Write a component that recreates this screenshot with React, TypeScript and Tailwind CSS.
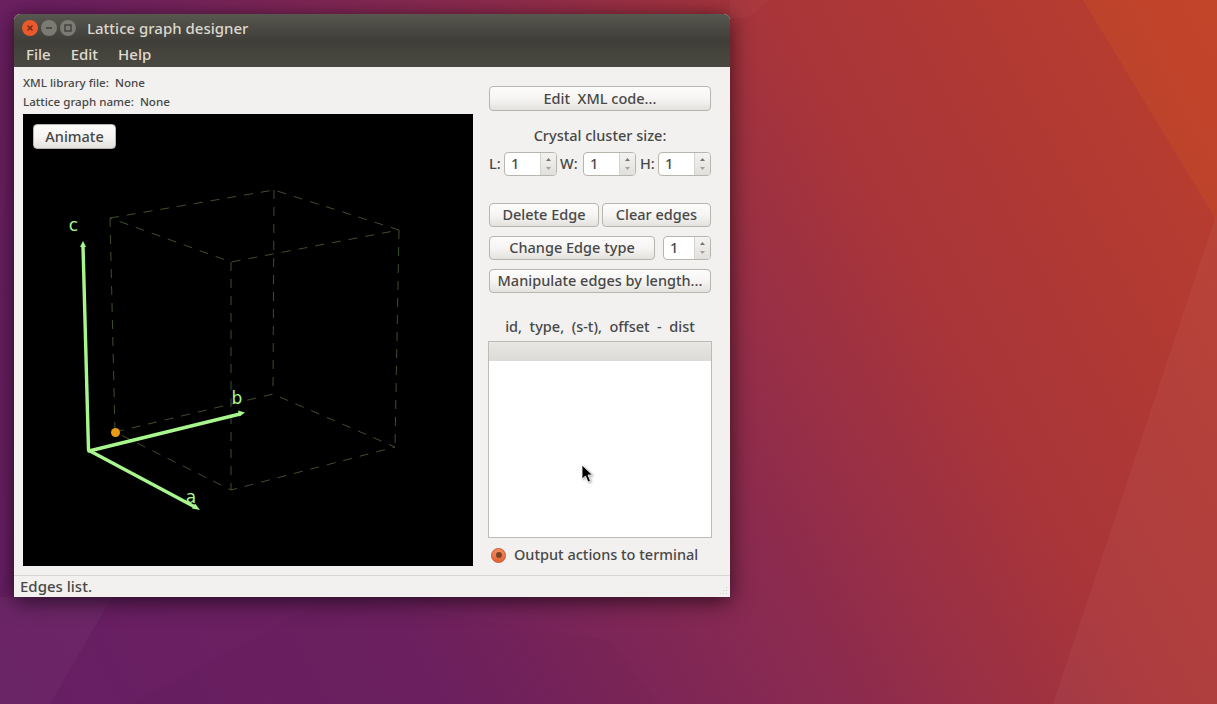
import type { ReactNode } from "react";

const uiFont = "font-['Noto_Sans','Open_Sans',sans-serif]";

function Button({ children, className = "" }: { children: ReactNode; className?: string }) {
  return (
    <button className={`flex items-center justify-center rounded-[4px] border border-[#b8b5af] bg-gradient-to-b from-[#fcfcfb] via-[#f6f5f3] to-[#e4e2de] text-[14.5px] font-medium text-[#484848] whitespace-pre ${className}`}>
      {children}
    </button>
  );
}

function Spin({ className = "" }: { className?: string }) {
  return (
    <div className={`flex h-[24px] overflow-hidden rounded-[4px] border border-[#b8b5af] bg-white ${className}`}>
      <div className="flex flex-1 items-center pb-[1px] pl-[6px] text-[14.5px] font-medium text-[#484848]">1</div>
      <div className="flex w-[16px] flex-col items-center justify-center gap-[6px] border-l border-[#d5d3ce] bg-gradient-to-b from-[#f4f3f1] to-[#e2e0dc]">
        <svg width="5" height="3" viewBox="0 0 5 3"><path d="M0 3 L2.5 0 L5 3Z" fill="#77756f" /></svg>
        <svg width="5" height="3" viewBox="0 0 5 3"><path d="M0 0 L2.5 3 L5 0Z" fill="#a3a19b" /></svg>
      </div>
    </div>
  );
}

function Desktop() {
  // pattern of the wallpaper, only faint facets over the gradient
  return (
    <svg className="absolute inset-0" width="1217" height="704" viewBox="0 0 1217 704">
      <polygon points="1083,0 1217,0 1217,218 1215,218" fill="#e0601c" fillOpacity="0.2" />
      <polygon points="1215,218 1217,218 1217,704 1053,704" fill="#ffffff" fillOpacity="0.04" />
      <polygon points="730,0 770,0 748,18 730,18" fill="#ffffff" fillOpacity="0.025" />
      <polygon points="0,597 112,597 50,704 0,704" fill="#ffffff" fillOpacity="0.03" />
      <polygon points="330,597 610,640 660,704 130,704" fill="#000000" fillOpacity="0.012" />
    </svg>
  );
}

function Lattice() {
  const green = "#a8f78e";
  return (
    <svg width="450" height="452" viewBox="23 114 450 452" className="block">
      <g fill="none" stroke="#3f4f2c" strokeWidth="1" strokeDasharray="9 8">
        <path d="M110 218 L274 190 L399 230 L231 262 Z" />
        <path d="M115 432 L273 394 L395 447 L231 490 Z" />
        <path d="M110 218 L115 432 M274 190 L273 394 M399 230 L395 447 M231 262 L231 490" />
      </g>
      <circle cx="115.5" cy="432.5" r="4.5" fill="#e89c14" />
      <g stroke={green} strokeWidth="3.4" strokeLinecap="round">
        <line x1="88.5" y1="450" x2="83" y2="246" />
        <line x1="89" y1="451" x2="240" y2="414" />
        <line x1="90" y1="451" x2="195" y2="507" />
      </g>
      <g fill={green}>
        <polygon points="83,241 80,247 86,247" />
        <polygon points="245,412.5 238,410.5 239.5,416.5" />
        <polygon points="200,510 192,508.5 195,503.5" />
      </g>
      <g fill={green} fontFamily="'DejaVu Sans', sans-serif" fontSize="17" fontWeight="400" textAnchor="middle">
        <text x="73.5" y="231">c</text>
        <text x="237" y="404">b</text>
        <text x="191" y="503">a</text>
      </g>
    </svg>
  );
}

export default function App() {
  return (
    <div className={`relative h-[704px] w-[1217px] overflow-hidden bg-[linear-gradient(62deg,#661e63_0%,#6d2060_28%,#8a2a50_52%,#a93539_72%,#bb3f2c_100%)] ${uiFont}`}>
      <Desktop />
      <div className="absolute left-[14px] top-[14px] flex h-[583px] w-[716px] flex-col overflow-hidden rounded-t-[6px] bg-[#f2f1ef] shadow-[0_4px_22px_rgba(0,0,0,0.65)]">
        {/* title + menu */}
        <header className="bg-gradient-to-b from-[#57564f] via-[#3f3e38] to-[#4a4941]">
          <div className="flex h-[28px] items-center">
            <div className="ml-[8px] flex items-center gap-[3px]">
              <span className="flex h-[16px] w-[16px] items-center justify-center rounded-full bg-[#e9592c]">
                <svg width="8" height="8" viewBox="0 0 8 8"><path d="M1.5 1.5 L6.5 6.5 M6.5 1.5 L1.5 6.5" stroke="#6b2a14" strokeWidth="1.4" /></svg>
              </span>
              <span className="flex h-[16px] w-[16px] items-center justify-center rounded-full bg-[#7b7a73]">
                <svg width="8" height="8" viewBox="0 0 8 8"><path d="M1 4 L7 4" stroke="#3d3c37" strokeWidth="1.4" /></svg>
              </span>
              <span className="flex h-[16px] w-[16px] items-center justify-center rounded-full bg-[#7b7a73]">
                <svg width="8" height="8" viewBox="0 0 8 8"><rect x="1" y="1" width="6" height="6" fill="none" stroke="#3d3c37" strokeWidth="1.3" /></svg>
              </span>
            </div>
            <span className="ml-[11px] text-[15px] font-medium text-[#dcd8cf]">Lattice graph designer</span>
          </div>
          <nav className="flex h-[25px] items-center gap-[20px] pl-[12px] text-[15px] font-medium text-[#e0dcd3]">
            <span>File</span>
            <span>Edit</span>
            <span>Help</span>
          </nav>
        </header>

        {/* main area */}
        <div className="flex flex-1">
          <section className="ml-[9px] w-[450px] pt-[7px] text-[11.6px] font-medium text-[#484848]">
            <p className="h-[19px] whitespace-pre leading-[18px]">XML library file:  None</p>
            <p className="h-[19px] whitespace-pre leading-[18px]">Lattice graph name:  None</p>
            <div className="relative mt-[2px] h-[452px] w-[450px] bg-black">
              <Lattice />
              <Button className="absolute left-[10px] top-[10px] h-[25px] w-[83px]">Animate</Button>
            </div>
          </section>

          <section className="ml-[16px] w-[222px] pt-[19px] text-[14.5px] font-medium text-[#484848]">
            <Button className="h-[25px] w-full">Edit  XML code...</Button>
            <p className="mt-[14px] h-[20px] text-center leading-[20px]">Crystal cluster size:</p>
            <div className="mt-[7px] flex h-[24px] items-center">
              <span className="w-[15px]">L:</span>
              <Spin className="w-[53px]" />
              <span className="ml-[3px] w-[23px]">W:</span>
              <Spin className="w-[53px]" />
              <span className="ml-[4px] w-[18px]">H:</span>
              <Spin className="w-[53px]" />
            </div>
            <div className="mt-[27px] flex justify-between">
              <Button className="h-[24px] w-[110px] pb-[1px]">Delete Edge</Button>
              <Button className="h-[24px] w-[109px] pb-[1px]">Clear edges</Button>
            </div>
            <div className="mt-[9px] flex justify-between">
              <Button className="h-[24px] w-[166px] pb-[1px]">Change Edge type</Button>
              <Spin className="w-[48px]" />
            </div>
            <Button className="mt-[9px] h-[24px] w-full pb-[1px]">Manipulate edges by length...</Button>
            <p className="mt-[23px] h-[20px] whitespace-pre text-center leading-[20px]">id,  type,  (s-t),  offset  -  dist</p>

            <div className="relative -mx-[1px] mt-[5px] flex h-[197px] flex-col border border-[#bdbbb6] bg-white">
              <div className="h-[19px] bg-gradient-to-b from-[#e9e7e4] to-[#dcdad6]" />
              {/* mouse pointer */}
              <svg className="absolute left-[92px] top-[122px] drop-shadow-[1px_1px_1px_rgba(0,0,0,0.35)]" width="13" height="20" viewBox="0 0 13 20">
                <path d="M1 1 L1 15 L4.5 12 L7 18 L9.5 17 L7 11 L11.5 11 Z" fill="#000000" stroke="#ffffff" strokeWidth="0.8" />
              </svg>
            </div>

            <div className="mt-[7px] flex h-[20px] items-center">
              <span className="ml-[2px] flex h-[15px] w-[15px] items-center justify-center rounded-full border border-[#c4532a] bg-gradient-to-b from-[#f28e62] to-[#e4622f]">
                <span className="h-[6px] w-[6px] rounded-full bg-[#7a4226]" />
              </span>
              <span className="ml-[8px]">Output actions to terminal</span>
            </div>
          </section>
        </div>

        {/* status bar */}
        <footer className="relative flex h-[22px] items-center border-t border-[#d9d7d3] pl-[6px] text-[15px] font-medium text-[#484848]">
          Edges list.
          {/* resize grip */}
          <svg className="absolute bottom-[1px] right-[1px]" width="10" height="10" viewBox="0 0 10 10" fill="#cfcdc8">
            <rect x="7" y="1" width="1" height="1" />
            <rect x="4" y="4" width="1" height="1" />
            <rect x="7" y="4" width="1" height="1" />
            <rect x="1" y="7" width="1" height="1" />
            <rect x="4" y="7" width="1" height="1" />
            <rect x="7" y="7" width="1" height="1" />
          </svg>
        </footer>
      </div>
    </div>
  );
}
